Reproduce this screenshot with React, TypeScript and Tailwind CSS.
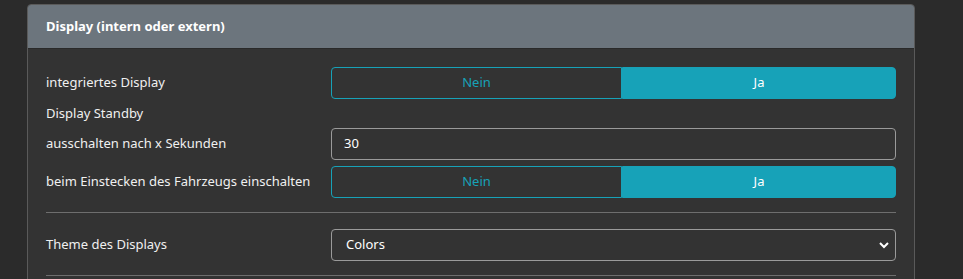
import React from 'react';

const Toggle = ({ value }: { value: boolean }) => (
    <div className="flex-1 flex h-[32px] text-[13px]">
        <div className={`w-[291px] flex items-center justify-center rounded-l-[4px] border border-[#17a2b8] ${value ? 'text-[#17a2b8]' : 'bg-[#17a2b8] text-white'}`}>Nein</div>
        <div className={`flex-1 flex items-center justify-center rounded-r-[4px] border border-[#17a2b8] ${value ? 'bg-[#17a2b8] text-white' : 'text-[#17a2b8]'}`}>Ja</div>
    </div>
);

export default function App() {
    return (
        <div className="w-[963px] h-[279px] bg-[#2b2b2b] pl-[27px] pt-[4px] overflow-hidden text-[#f0f0f0]" style={{ fontFamily: '"Noto Sans", "Open Sans", sans-serif' }}>
            <div className="w-[888px] border border-[#5a5a5a] rounded-t-[4px] bg-[#333333]">
                <div className="h-[44px] bg-[#6c757d] rounded-t-[3px] flex items-center px-[18px] text-[13px] font-bold text-white border-b border-[#2a2a2a]">
                    Display (intern oder extern)
                </div>
                <div className="px-[18px] pt-[18px] pb-[20px]">
                    <div className="flex items-center">
                        <div className="w-[285px] text-[13px]">integriertes Display</div>
                        <Toggle value={true} />
                    </div>
                    <div className="h-[29px] flex items-center text-[13px]">Display Standby</div>
                    <div className="flex items-center">
                        <div className="w-[285px] text-[13px]">ausschalten nach x Sekunden</div>
                        <div className="flex-1 h-[32px] border border-[#9a9a9a] rounded-[4px] flex items-center px-[12px] text-[13px] text-white">30</div>
                    </div>
                    <div className="flex items-center mt-[6px]">
                        <div className="w-[285px] text-[13px]">beim Einstecken des Fahrzeugs einschalten</div>
                        <Toggle value={true} />
                    </div>
                    <div className="h-[1px] bg-[#6e6e6e] mt-[14px] mb-[16px]"></div>
                    <div className="flex items-center">
                        <div className="w-[285px] text-[13px]">Theme des Displays</div>
                        <div className="flex-1 h-[32px] border border-[#9a9a9a] rounded-[4px] flex items-center justify-between pl-[14px] pr-[6px] text-[13px] text-white">
                            <span>Colors</span>
                            <svg width="10" height="8" viewBox="0 0 10 8"><path d="M1 2 L5 6 L9 2" fill="none" stroke="white" strokeWidth="2" /></svg>
                        </div>
                    </div>
                    <div className="h-[1px] bg-[#6e6e6e] mt-[14px]"></div>
                </div>
            </div>
        </div>
    );
}
